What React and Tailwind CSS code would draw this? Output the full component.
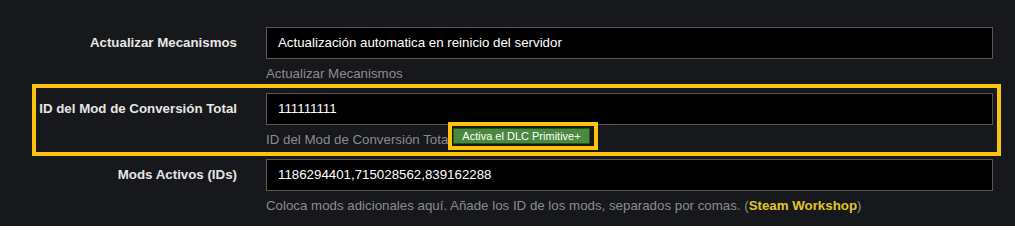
const FONT = { fontFamily: '"Liberation Sans", Arial, sans-serif' };

function Row({ label, value, children, highlight }) {
  return (
    <div
      className={`flex h-[64px] pt-[5px] ${highlight ? 'outline-4 outline-[#fcc40c] ml-[36px] mr-[18px] pl-[4px]' : 'pl-[40px]'}`}
    >
      <div className="w-[226px] shrink-0 h-[32px] flex items-center justify-end pr-[29px] text-[13.3px] font-bold text-[#e6e6e6] whitespace-nowrap">
        {label}
      </div>
      <div className="w-[727px] shrink-0">
        <div className="h-[32px] border border-[#5c574f] bg-black flex items-center px-[11px] text-[13.3px] text-white">
          {value}
        </div>
        <div className="relative mt-[5px] h-[20px] flex items-center text-[13.3px] text-[#8c8c8c] whitespace-nowrap">
          {children}
        </div>
      </div>
    </div>
  );
}

export default function App() {
  return (
    <div className="w-[1015px] h-[226px] bg-[#17181b] pt-[22px] overflow-hidden" style={FONT}>
      <Row label="Actualizar Mecanismos" value="Actualización automatica en reinicio del servidor">
        Actualizar Mecanismos
      </Row>
      <div className="h-[2px]" />
      <Row highlight label="ID del Mod de Conversión Total" value="111111111">
        <span>ID del Mod de Conversión Total</span>
        <div className="absolute left-[182px] top-[-8px] w-[150px] h-[28px] border-4 border-[#fcc40c] bg-[#17181b] pl-[1px] pt-[2px]">
          <div className="w-[137px] h-[16px] bg-[#4a8a3a] border border-[#2b4f24] flex items-center justify-center text-[11px] text-white leading-none">
            Activa el DLC Primitive+
          </div>
        </div>
      </Row>
      <div className="h-[2px]" />
      <Row label="Mods Activos (IDs)" value="1186294401,715028562,839162288">
        <span>
          Coloca mods adicionales aquí. Añade los ID de los mods, separados por comas. (
          <span className="text-[#e0c52a] font-semibold">Steam Workshop</span>)
        </span>
      </Row>
    </div>
  );
}
